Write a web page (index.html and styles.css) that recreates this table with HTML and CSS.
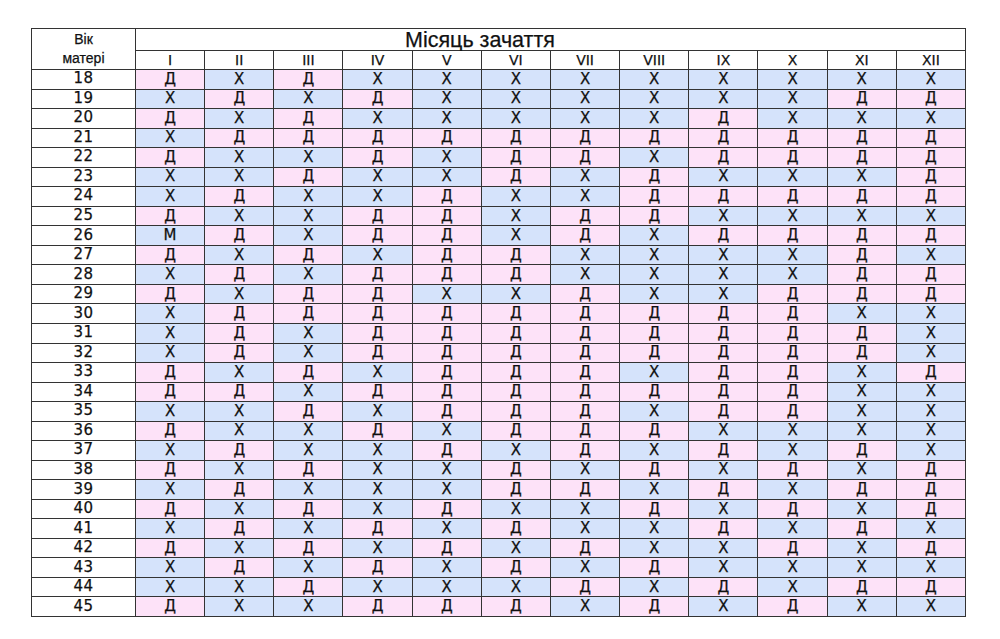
FILE: index.html
```html
<!DOCTYPE html>
<html lang="uk">
<head>
<meta charset="utf-8">
<title>Місяць зачаття</title>
<link rel="stylesheet" href="styles.css">
</head>
<body>
<div class="page">
  <div class="chart" id="chart">
    <div class="age-head">Вік<br>матері</div>
    <div class="title">Місяць зачаття</div>
  </div>
</div>
<script>
  var data = {
    18: "ДXДXXXXXXXXX",
    19: "XДXДXXXXXXДД",
    20: "ДXДXXXXXДXXX",
    21: "XДДДДДДДДДДД",
    22: "ДXXДXДДXДДДД",
    23: "XXДXXДXДXXXД",
    24: "XДXXДXXДДДДД",
    25: "ДXXДДXДДXXXX",
    26: "МДXДДXДXДДДД",
    27: "ДXДXДДXXXXДX",
    28: "XДXДДДXXXXДД",
    29: "ДXДДXXДXXДДД",
    30: "XДДДДДДДДДXX",
    31: "XДXДДДДДДДДX",
    32: "XДXДДДДДДДДX",
    33: "ДXДXДДДXДДXД",
    34: "ДДXДДДДДДДXX",
    35: "XXДXДДДXДДXX",
    36: "ДXXДXДДДXXXX",
    37: "XДXXДXДXДXДX",
    38: "ДXДXXДXДXДXД",
    39: "XДXXXДДXДXДД",
    40: "ДXДXДXXДXДXД",
    41: "XДXДXДXXДXДX",
    42: "ДXДXДXДXXДXД",
    43: "XДXДXДXДXXXX",
    44: "XXДXXXДXДXДД",
    45: "ДXXДДДXДXДXX"
  };
  var months = ["I","II","III","IV","V","VI","VII","VIII","IX","X","XI","XII"];
  var chart = document.getElementById("chart");
  months.forEach(function (m) {
    var c = document.createElement("div");
    c.className = "month";
    c.textContent = m;
    chart.appendChild(c);
  });
  for (var age = 18; age <= 45; age++) {
    var a = document.createElement("div");
    a.className = "age";
    a.textContent = age;
    chart.appendChild(a);
    var row = data[age];
    for (var i = 0; i < row.length; i++) {
      var ch = row[i];
      var d = document.createElement("div");
      d.className = "cell " + (ch === "Д" ? "girl" : "boy");
      d.textContent = ch === "X" ? "Х" : ch;
      chart.appendChild(d);
    }
  }
</script>
</body>
</html>
```
FILE: styles.css
```css
html, body {
  margin: 0;
  padding: 0;
  background: #ffffff;
}

.page {
  padding: 28px 0 0 31px;
}

.chart {
  box-sizing: border-box;
  width: 935px;
  height: 589px;
  display: grid;
  grid-template-columns: 103px repeat(12, 1fr);
  grid-template-rows: 21px 18px repeat(28, 1fr);
  gap: 1px;
  background: #333333;
  border: 1px solid #333333;
  color: #111111;
}

.chart > div {
  display: flex;
  align-items: center;
  justify-content: center;
  background: #ffffff;
  line-height: 1;
  -webkit-text-stroke: 0.25px #111111;
}

.age-head {
  grid-row: 1 / span 2;
  grid-column: 1;
  flex-direction: column;
  font-family: "Liberation Sans", Arial, sans-serif;
  font-size: 14px;
  line-height: 19px !important;
  text-align: center;
}

.title {
  grid-row: 1;
  grid-column: 2 / span 12;
  justify-content: flex-start !important;
  padding-left: 269px;
  font-family: "Liberation Sans", Arial, sans-serif;
  font-size: 21.5px;
  padding-top: 2px;
}

.month {
  font-family: "DejaVu Sans", Verdana, sans-serif;
  font-size: 14px;
}

.age {
  font-family: "DejaVu Sans", Verdana, sans-serif;
  font-size: 15px;
  letter-spacing: 0.5px;
  padding-bottom: 1px;
}

.cell {
  font-family: "DejaVu Sans", Verdana, sans-serif;
  font-size: 15px;
}

.chart > .girl {
  background: #fde2f8;
}

.chart > .boy {
  background: #d5e3fb;
}
```
